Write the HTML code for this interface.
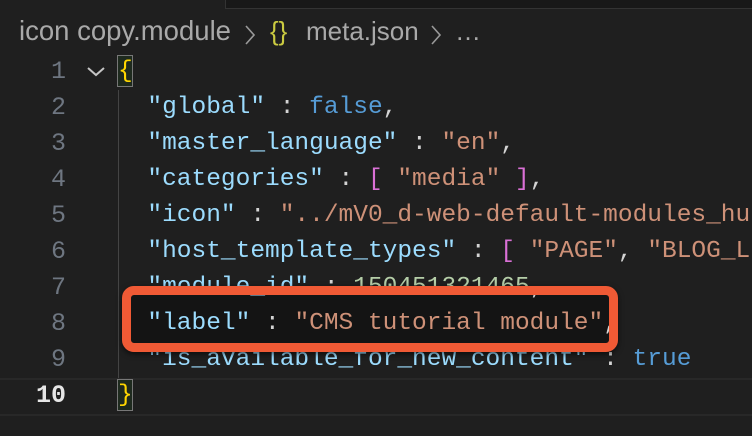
<!DOCTYPE html>
<html><head><style>
body{margin:0;width:752px;height:436px;background:#1f1f1f;overflow:hidden;position:relative;font-family:"Liberation Mono",monospace;}
.top{position:absolute;left:225px;top:0;width:527px;height:8px;background:#181818;border-left:1px solid #333;border-bottom:1px solid #333;}
.bc{position:absolute;top:16px;font:26px "Liberation Sans",sans-serif;color:#a9a9a9;white-space:pre;}
.ln{position:absolute;width:66px;text-align:right;font-size:25px;color:#6e7681;line-height:36px;}
.code{position:absolute;left:118px;font-size:24.5px;line-height:36px;white-space:pre;color:#d4d4d4;}
.k{color:#9cdcfe}.s{color:#ce9178}.b{color:#569cd6}.n{color:#b5cea8}.p{color:#da70d6}.y{color:#ffd700}
</style></head><body>
<div class="top"></div>
<div class="bc" style="left:19px;font-size:27.5px;top:15px">icon copy.module</div>
<svg style="position:absolute;left:243px;top:24px" width="14" height="22"><path d="M3 2 L11 11 L3 20" stroke="#999" stroke-width="1.6" fill="none"/></svg>
<div class="bc" style="left:270px;color:#cbcb41">{}</div>
<div class="bc" style="left:306px">meta.json</div>
<svg style="position:absolute;left:429px;top:24px" width="14" height="22"><path d="M3 2 L11 11 L3 20" stroke="#999" stroke-width="1.6" fill="none"/></svg>
<div class="bc" style="left:455px">…</div>
<div style="position:absolute;left:118px;top:90px;width:1px;height:288px;background:#444"></div>
<div style="position:absolute;left:0;top:378px;width:752px;height:34px;border-top:2px solid #282828;border-bottom:2px solid #282828"></div>
<div style="position:absolute;left:117px;top:55px;width:14px;height:30px;border:1px solid #777;background:#1e2a1e"></div>
<div style="position:absolute;left:117px;top:379px;width:14px;height:30px;border:1px solid #777;background:#1e2a1e"></div>
<svg style="position:absolute;left:86px;top:64px" width="20" height="14"><path d="M2 4 L10 11 L18 4" stroke="#c5c5c5" stroke-width="2" fill="none"/></svg>
<div class="ln" style="top:54px">1<br>2<br>3<br>4<br>5<br>6<br>7<br>8<br>9<br><span style="color:#e6e6e6;font-weight:bold">10</span></div>
<div style="position:absolute;left:131px;top:295px;width:478px;height:48px;background:#141414"></div>
<div class="code" style="top:54px"><span class="y">{</span>
  <span class="k">"global"</span> : <span class="b">false</span>,
  <span class="k">"master_language"</span> : <span class="s">"en"</span>,
  <span class="k">"categories"</span> : <span class="p">[</span> <span class="s">"media"</span> <span class="p">]</span>,
  <span class="k">"icon"</span> : <span class="s">"../mV0_d-web-default-modules_hub</span>
  <span class="k">"host_template_types"</span> : <span class="p">[</span> <span class="s">"PAGE"</span>, <span class="s">"BLOG_LI</span>
  <span class="k">"module_id"</span> : <span class="n">150451321465</span>,
  <span class="k">"label"</span> : <span class="s">"CMS tutorial module"</span>,
  <span class="k">"is_available_for_new_content"</span> : <span class="b">true</span>
<span class="y">}</span></div>
<div style="position:absolute;left:122px;top:286px;width:478px;height:48px;border:9px solid #f05a35;border-radius:12px;box-shadow:0 2px 6px rgba(0,0,0,.6)"></div>
</body></html>
